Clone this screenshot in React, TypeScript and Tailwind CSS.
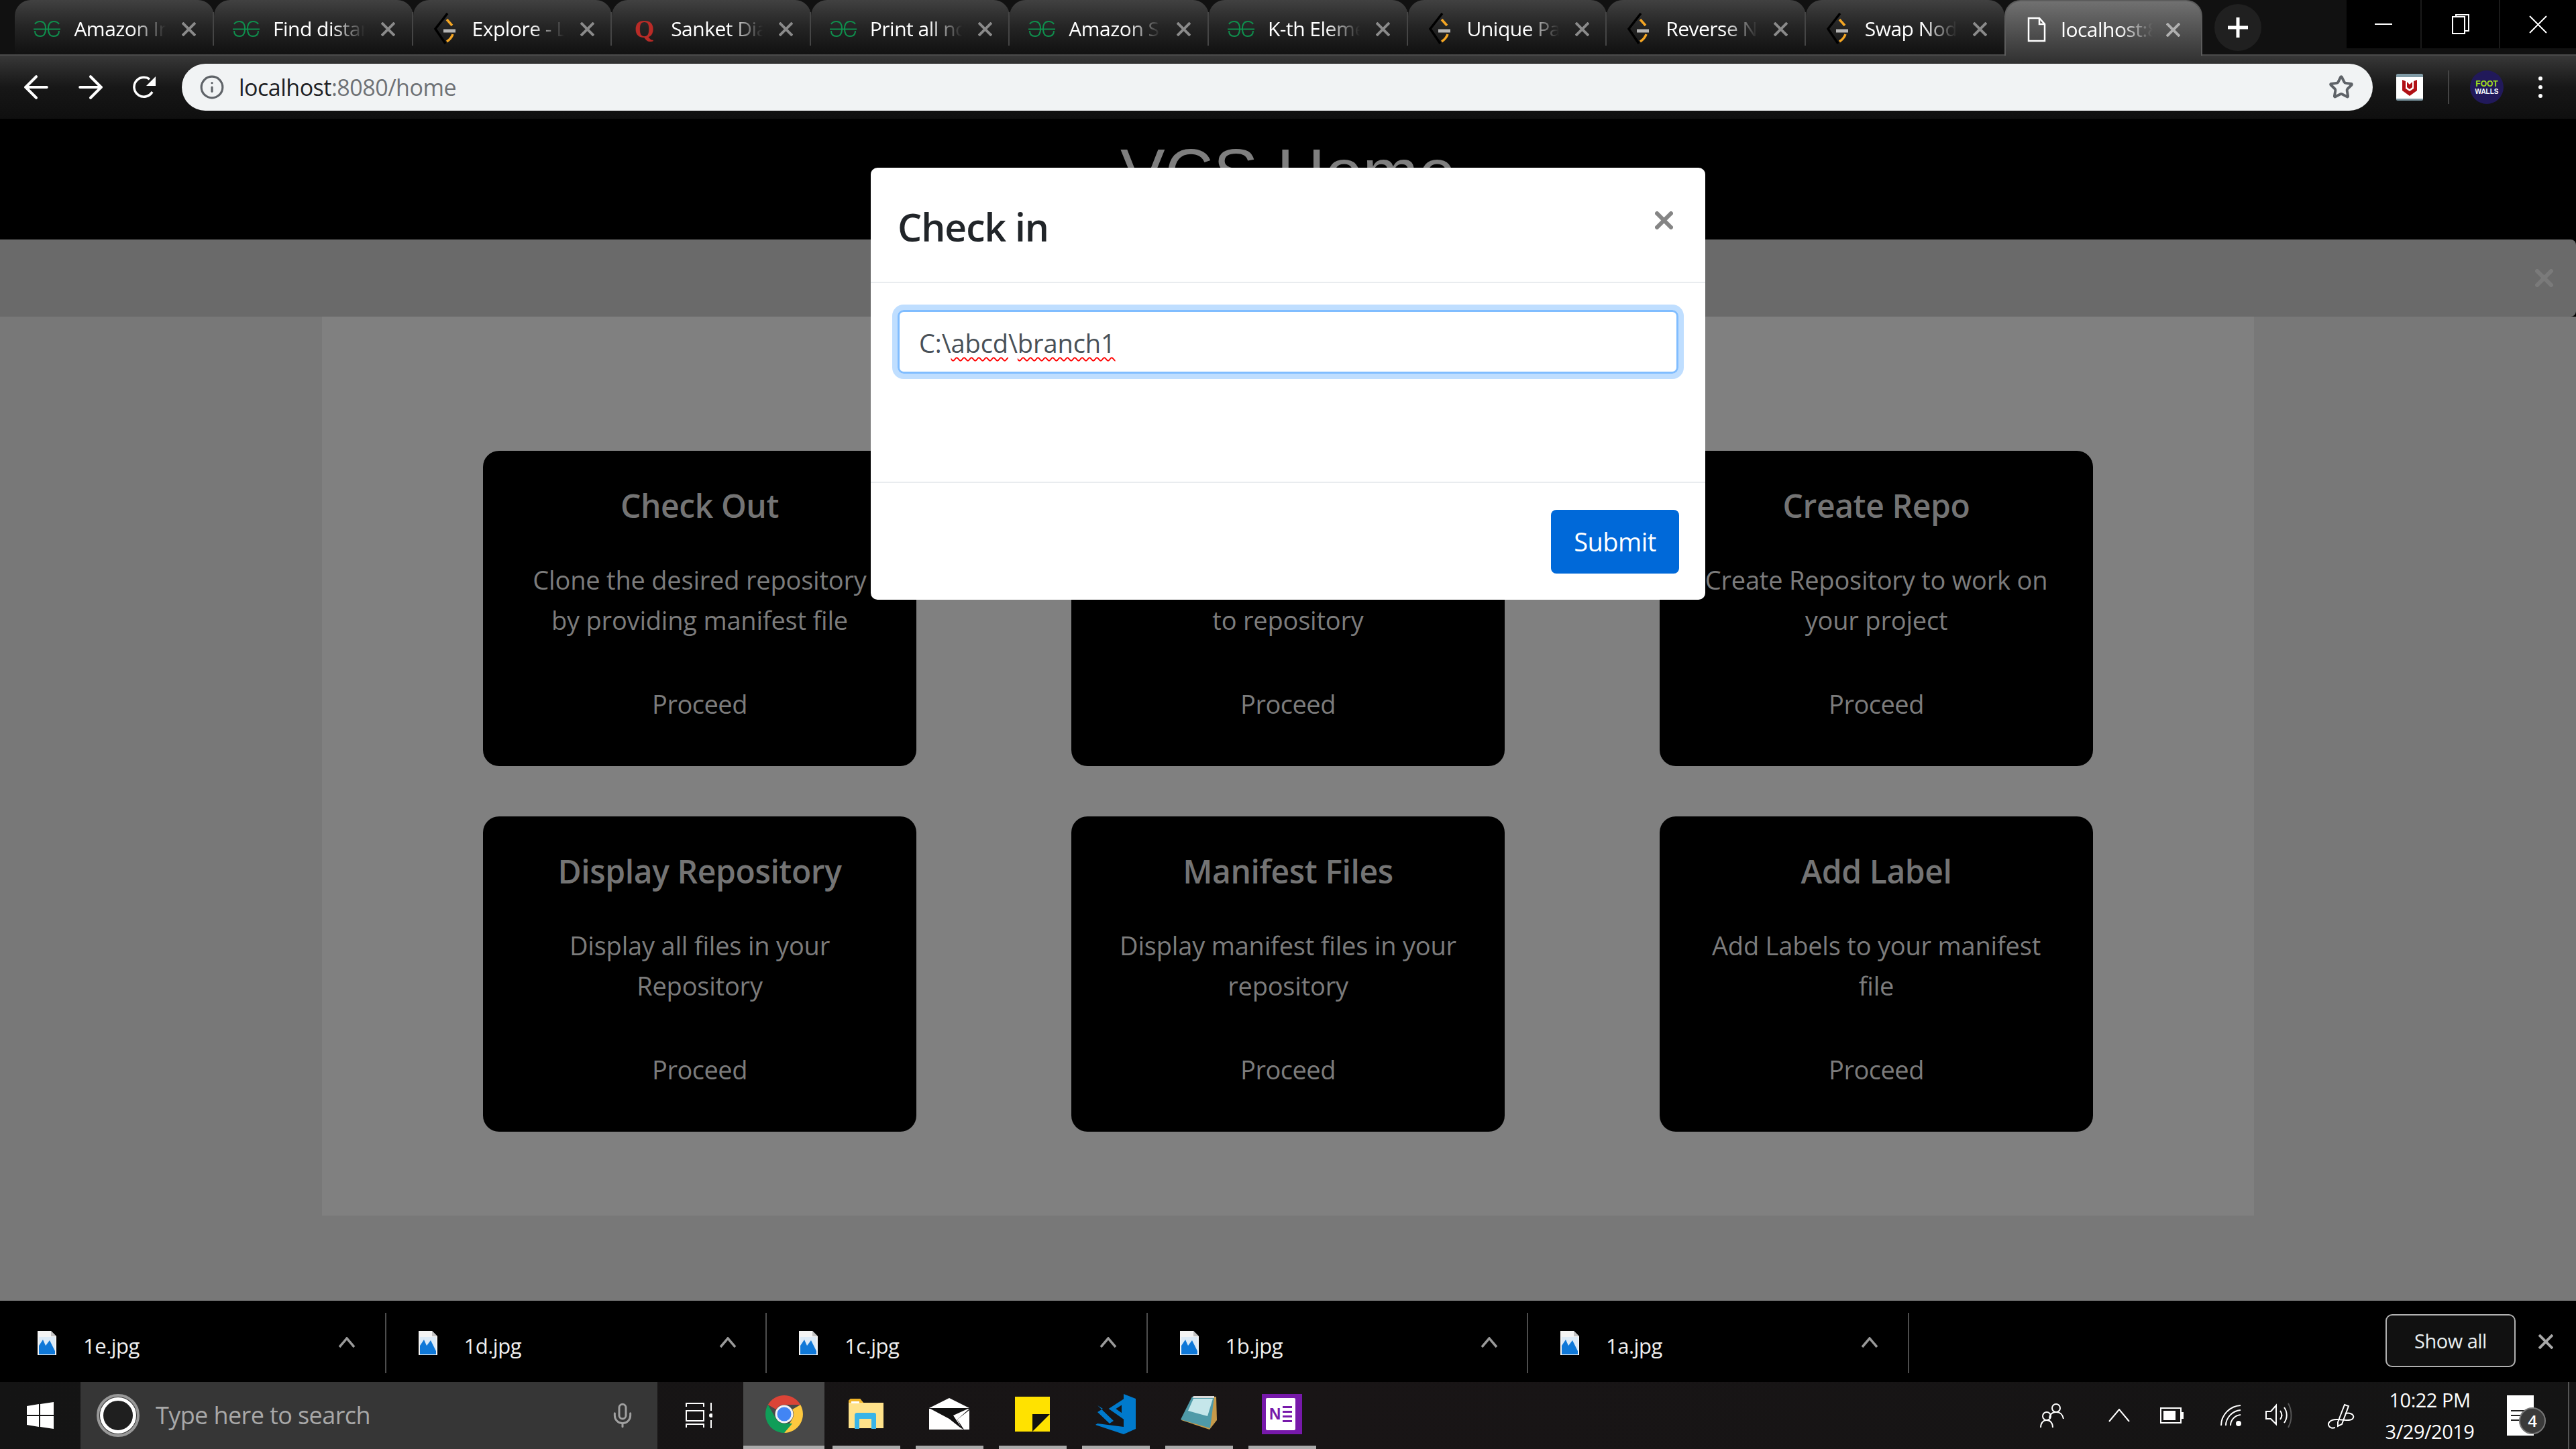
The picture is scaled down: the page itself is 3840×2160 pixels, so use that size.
import { ArrowLeft, ArrowRight, Info, Star, Mic } from "lucide-react";

const UI_FONT = "font-['Open_Sans','Noto_Sans',sans-serif]";

function Cross({ size, stroke, className }: { size: number; stroke: number; className: string }) {
  return (
    <svg width={size} height={size} viewBox={`0 0 ${size} ${size}`} className={className}>
      <path d={`M1 1L${size - 1} ${size - 1}M${size - 1} 1L1 ${size - 1}`} stroke="currentColor" strokeWidth={stroke} fill="none" />
    </svg>
  );
}

function GfgIcon() {
  return (
    <svg width="40" height="24" viewBox="0 0 40 24" fill="none" stroke="#0f8f4d" strokeWidth="2">
      <path d="M0 12.5H40" />
      <path d="M2 5C4 1.500 7 1 10 1C15 1 18 5 18 12C18 19 15 23 10 23C5 23 2 20 2 15" />
      <path d="M38 5C36 1.500 33 1 30 1C25 1 22 5 22 12C22 19 25 23 30 23C35 23 38 20 38 15" />
    </svg>
  );
}

function CodeIcon() {
  return (
    <svg width="36" height="48" viewBox="0 0 36 48" fill="none" strokeWidth="3.500">
      <path d="M21 1L3 24L18 46" stroke="#000" />
      <path d="M20 10L28 19" stroke="#f5a623" />
      <path d="M29 32C27 38 23 41 20 43" stroke="#f5a623" />
      <path d="M15 27H33" stroke="#b5b5b5" strokeWidth="5" />
    </svg>
  );
}

function QuoraIcon() {
  return <span className="font-['Liberation_Serif',serif] font-bold text-[38px] leading-none text-[#b92b27]">Q</span>;
}

function PageIcon() {
  return (
    <svg width="28" height="38" viewBox="0 0 28 38" fill="none" stroke="#fff" strokeWidth="2.500">
      <path d="M2 2H18L26 11V36H2Z" />
      <path d="M18 2V11H26" />
    </svg>
  );
}

type TabInfo = { title: string; icon: "gfg" | "code" | "quora" };

const tabs: TabInfo[] = [
  { title: "Amazon In", icon: "gfg" },
  { title: "Find distar", icon: "gfg" },
  { title: "Explore - L", icon: "code" },
  { title: "Sanket Dia", icon: "quora" },
  { title: "Print all no", icon: "gfg" },
  { title: "Amazon SI", icon: "gfg" },
  { title: "K-th Eleme", icon: "gfg" },
  { title: "Unique Pa", icon: "code" },
  { title: "Reverse N", icon: "code" },
  { title: "Swap Nod", icon: "code" },
];

function Tab({ tab, last }: { tab: TabInfo; last: boolean }) {
  return (
    <div className="w-[296.600px] h-[81px] shrink-0 flex items-center pt-[5px] pl-[28px] rounded-t-[24px] bg-gradient-to-b from-[#414141] via-[#242424] to-[#111111]">
      <div className="w-[40px] flex justify-center shrink-0">
        {tab.icon === "gfg" && <GfgIcon />}
        {tab.icon === "code" && <CodeIcon />}
        {tab.icon === "quora" && <QuoraIcon />}
      </div>
      <div className="ml-[20px] w-[140px] shrink-0 overflow-hidden whitespace-nowrap text-[30px] leading-[40px] text-white tracking-[-0.5px] [mask-image:linear-gradient(to_right,black_62%,transparent_98%)]">
        {tab.title}
      </div>
      <Cross size={21} stroke={4} className="ml-[21px] text-[#8a8a8a] shrink-0" />
      {!last && <div className="ml-auto w-[2px] h-[50px] bg-[#454545]" />}
    </div>
  );
}

function TabStrip() {
  return (
    <div className="h-[83px] shrink-0 flex items-start pl-[22.400px] bg-[#111111] border-b-2 border-[#4a4a4a]">
      {tabs.map((t, i) => (
        <Tab key={t.title} tab={t} last={i === tabs.length - 1} />
      ))}
      <div className="w-[295px] h-[83px] shrink-0 relative z-10 flex items-center pl-[32px] pt-[3px] rounded-t-[24px] border-x-2 border-t-2 border-[#5c5c5c] bg-gradient-to-b from-[#717171] to-[#383838]">
        <PageIcon />
        <div className="ml-[22px] w-[140px] overflow-hidden whitespace-nowrap text-[30px] leading-[40px] text-white tracking-[-0.5px] [mask-image:linear-gradient(to_right,black_62%,transparent_98%)]">
          localhost:8
        </div>
        <Cross size={21} stroke={4} className="ml-[17px] text-[#b0b0b0]" />
      </div>
      <div className="ml-[18px] mt-[6px] w-[70px] h-[70px] rounded-full bg-[#202020] flex items-center justify-center">
        <svg width="30" height="30" viewBox="0 0 30 30" stroke="#fff" strokeWidth="5">
          <path d="M15 0V30M0 15H30" />
        </svg>
      </div>
      <div className="ml-auto h-[72px] w-[342px] bg-black flex text-white">
        <div className="w-[112px] flex items-center justify-center border-r-2 border-[#1a1a1a]">
          <div className="w-[26px] h-[2px] bg-white" />
        </div>
        <div className="w-[117px] flex items-center justify-center border-r-2 border-[#1a1a1a]">
          <svg width="26" height="30" viewBox="0 0 26 30" fill="none" stroke="#fff" strokeWidth="2">
            <path d="M6 4V1H25V25H19" />
            <rect x="1" y="4" width="18" height="25" />
          </svg>
        </div>
        <div className="flex-1 flex items-center justify-center">
          <Cross size={27} stroke={2} className="text-white" />
        </div>
      </div>
    </div>
  );
}

function Toolbar() {
  return (
    <div className="h-[94px] shrink-0 flex items-center bg-gradient-to-b from-[#383838] via-[#171717] to-[#0f0f0f]">
      <div className="w-[271px] shrink-0 flex items-center text-white">
        <ArrowLeft size={54} strokeWidth={1.800} className="ml-[27px]" />
        <ArrowRight size={54} strokeWidth={1.800} className="ml-[27px]" />
        <svg width="38" height="38" viewBox="0 0 38 38" fill="none" className="ml-[34px]">
          <path d="M31 26A14.500 14.500 0 1 1 27 7" stroke="#fff" strokeWidth="3.500" />
          <path d="M36 3V17H22Z" fill="#fff" />
        </svg>
      </div>
      <div className="w-[3266px] h-[70px] shrink-0 rounded-full bg-[#f1f3f4] flex items-center pl-[26px] pr-[28px] text-[#5f6368]">
        <Info size={38} strokeWidth={2} />
        <div className="ml-[21px] text-[34px] tracking-[-0.5px] text-[#202124]">
          localhost<span className="text-[#6f7276]">:8080/home</span>
        </div>
        <Star size={38} strokeWidth={2.500} className="ml-auto" />
      </div>
      <div className="ml-[35px] w-[40px] h-[40px] bg-white border-t-[5px] border-b-[3px] border-[#7f9aa5] rounded-[2px] flex items-center justify-center">
        <svg width="24" height="26" viewBox="0 0 24 26">
          <path d="M1 1L6 3V14L12 18L18 14V3L23 1V17L12 25L1 17Z" fill="#b01015" />
          <path d="M8 4L12 8L16 4V12L12 15L8 12Z" fill="#b01015" />
        </svg>
      </div>
      <div className="ml-[37px] w-[2px] h-[50px] bg-[#444]" />
      <div className="ml-[31px] w-[50px] h-[50px] rounded-full bg-[#21195a] flex flex-col items-center justify-center font-['Liberation_Sans',sans-serif] font-bold text-[12px] leading-[12px]">
        <span className="text-[#a4e01c]">FOOT</span>
        <span className="text-white text-[10px] leading-[11px]">WALLS</span>
      </div>
      <div className="ml-[52px] flex flex-col gap-[7px]">
        <div className="w-[6px] h-[6px] rounded-full bg-white" />
        <div className="w-[6px] h-[6px] rounded-full bg-white" />
        <div className="w-[6px] h-[6px] rounded-full bg-white" />
      </div>
    </div>
  );
}

type CardInfo = { title: string; lines: [string, string] };

const cards: CardInfo[] = [
  { title: "Check Out", lines: ["Clone the desired repository", "by providing manifest file"] },
  { title: "Check In", lines: ["Check in your project files", "to repository"] },
  { title: "Create Repo", lines: ["Create Repository to work on", "your project"] },
  { title: "Display Repository", lines: ["Display all files in your", "Repository"] },
  { title: "Manifest Files", lines: ["Display manifest files in your", "repository"] },
  { title: "Add Label", lines: ["Add Labels to your manifest", "file"] },
];

function FeatureCard({ card }: { card: CardInfo }) {
  return (
    <div className="h-[470px] bg-black rounded-[24px] pt-[52px] text-center text-[#7c7c7c]">
      <h4 className="text-[48px] leading-[60px] font-semibold text-[#747474] tracking-[-0.4px]">{card.title}</h4>
      <p className="mt-[50px] text-[38px] leading-[60px] tracking-[-0.2px] whitespace-nowrap">
        {card.lines[0]}
        <br />
        {card.lines[1]}
      </p>
      <p className="mt-[65px] text-[38px] leading-[60px] tracking-[-0.5px]">Proceed</p>
    </div>
  );
}

function Page() {
  return (
    <div className="flex-1 min-h-0 flex flex-col">
      <header className="h-[180px] shrink-0 bg-black pt-[24px] text-center font-['Liberation_Sans',sans-serif] text-[100px] leading-[112px] text-[#7f7f7f]">
        VCS Home
      </header>
      <div className="h-[115px] shrink-0 bg-[#6a6a6a] rounded-r-[8px] flex items-center justify-end pr-[34px] text-[#7a7a7a]">
        <Cross size={27} stroke={6} className="" />
      </div>
      <main className="flex-1 min-h-0 bg-[#787878] flex justify-center">
        <div className="w-[2880px] h-[1340px] bg-[#808080] px-[240px] pt-[200px] grid grid-cols-[646px_646px_646px] gap-x-[231px] gap-y-[75px] content-start">
          {cards.map((c) => (
            <FeatureCard key={c.title} card={c} />
          ))}
        </div>
      </main>
    </div>
  );
}

function CheckInModal() {
  return (
    <div className="absolute left-[1298px] top-[250px] w-[1244px] h-[644px] bg-white rounded-[10px] flex flex-col">
      <div className="h-[172px] shrink-0 border-b-2 border-[#e9ecef] flex items-start justify-between pl-[40px] pr-[48px]">
        <h5 className="mt-[58px] text-[57px] leading-[60px] font-semibold text-[#212529] tracking-[-1px]">Check in</h5>
        <Cross size={27} stroke={6} className="mt-[65px] text-[#858585]" />
      </div>
      <div className="flex-1 pt-[40px] px-[40px]">
        <div className="h-[95px] rounded-[9px] border-[3px] border-[#80bdff] shadow-[0_0_0_8px_#bfdeff] flex items-center pl-[29px] pt-[4px] text-[38px] text-[#495057] tracking-[-0.1px]">
          C:\
          <span className="underline decoration-wavy decoration-[#ff0000] decoration-2 underline-offset-[6px]">abcd</span>
          \
          <span className="underline decoration-wavy decoration-[#ff0000] decoration-2 underline-offset-[6px]">branch1</span>
        </div>
      </div>
      <div className="h-[176px] shrink-0 border-t-2 border-[#e9ecef] flex items-start justify-end pt-[40px] pr-[39px]">
        <button className="w-[191px] h-[95px] rounded-[8px] bg-[#0069d9] text-white text-[38px] tracking-[-0.5px]">Submit</button>
      </div>
    </div>
  );
}

function FileIcon() {
  return (
    <svg width="28" height="36" viewBox="0 0 28 36">
      <path d="M0 0H20L28 8V36H0Z" fill="#f4f4f4" />
      <path d="M20 0L28 8H20Z" fill="#c4c4c4" />
      <rect x="2" y="9" width="24" height="26" fill="#0f78d8" />
      <path d="M2 9H26V30L18 14L12 22L8 13L2 22Z" fill="#dcebf8" />
    </svg>
  );
}

const downloads = ["1e.jpg", "1d.jpg", "1c.jpg", "1b.jpg", "1a.jpg"];

function DownloadBar() {
  return (
    <div className="h-[121px] shrink-0 bg-black flex items-start pl-[8px] text-white">
      {downloads.map((name) => (
        <div key={name} className="w-[567.500px] h-[90px] mt-[18px] shrink-0 relative flex items-center pl-[48px] border-r-2 border-[#4d4d4d]">
          <FileIcon />
          <span className="ml-[40px] mt-[8px] text-[31px] tracking-[-0.5px] text-[#f0f0f0]">{name}</span>
          <svg width="26" height="16" viewBox="0 0 26 16" fill="none" stroke="#9a9a9a" strokeWidth="3.500" className="absolute left-[496px] top-[36px]">
            <path d="M2 15L13 2L24 15" />
          </svg>
        </div>
      ))}
      <div className="ml-auto mt-[20px] w-[194px] h-[79px] bg-[#111] border-2 border-[#b0b0b0] rounded-[10px] flex items-center justify-center text-[29px] font-medium tracking-[-0.5px] text-[#e8eef0]">
        Show all
      </div>
      <div className="w-[90px] mt-[50px] flex justify-center">
        <Cross size={22} stroke={4} className="text-[#a8a8a8]" />
      </div>
    </div>
  );
}

function ChromeIcon() {
  return (
    <svg width="56" height="56" viewBox="0 0 56 56">
      <path d="M28 0A28 28 0 0 1 52.200 14H28A14 14 0 0 0 15.900 21L3.800 14A28 28 0 0 1 28 0Z" fill="#db4437" />
      <path d="M52.200 14A28 28 0 0 1 28 56L40.100 35A14 14 0 0 0 40.100 21L52.200 14Z" fill="#fdc83f" />
      <path d="M3.800 14L15.900 35A14 14 0 0 0 28 42H40.100L28 56A28 28 0 0 1 3.800 14Z" fill="#0f9d58" />
      <circle cx="28" cy="28" r="13.500" fill="#f3f3f3" />
      <circle cx="28" cy="28" r="10.500" fill="#4285f4" />
    </svg>
  );
}

function FolderIcon() {
  return (
    <svg width="52" height="46" viewBox="0 0 52 46">
      <path d="M0 3L3 0H17L22 6H52V44H0Z" fill="#ffe28a" />
      <path d="M0 3L3 0H17L22 6H0Z" fill="#f0b429" />
      <rect x="4" y="4" width="12" height="3" fill="#fff" />
      <path d="M9 45V24C9 22 11 21 12 21H38C40 21 41 22 41 24V45H34V30H16V45Z" fill="#39b4e8" />
    </svg>
  );
}

function MailIcon() {
  return (
    <svg width="60" height="48" viewBox="0 0 60 48">
      <path d="M30 0L60 15H0Z" fill="#fff" />
      <path d="M0 16H60L42 32L49 47H0Z" fill="#fff" />
      <path d="M0 15H60L36 26L50 47L30 31L0 15Z" fill="#111" />
      <path d="M0 47V20L24 34L52 47Z" fill="#fff" />
      <path d="M60 18V47H52L42 32Z" fill="#fff" />
    </svg>
  );
}

function StickyIcon() {
  return (
    <svg width="52" height="52" viewBox="0 0 52 52">
      <rect width="52" height="52" fill="#ffe200" />
      <path d="M26 26H52L26 52Z" fill="#111" />
    </svg>
  );
}

function CodeEditorIcon() {
  return (
    <svg width="60" height="60" viewBox="0 0 60 60">
      <path d="M42 0L60 7V52L42 60L0 46L3 44L42 49Z" fill="#007acc" />
      <path d="M42 11V34L25 22Z" fill="none" stroke="#007acc" strokeWidth="6" />
      <path d="M3 17L27 40L21 44L3 27L11 22Z" fill="#007acc" />
    </svg>
  );
}

function NotepadIcon() {
  return (
    <svg width="56" height="54" viewBox="0 0 56 54">
      <path d="M20 1H54L55 36L44 50L2 36Z" fill="#c69a4a" />
      <path d="M18 1H51L45 48L1 35Z" fill="#4f9aa8" />
      <path d="M20 4H49L41 30L12 22Z" fill="#c5e6ea" />
      <path d="M20 0H51V3H19Z" fill="#d9d9d9" />
    </svg>
  );
}

function OneNoteIcon() {
  return (
    <div className="w-[60px] h-[60px] bg-[#7719aa] flex items-center pl-[6px]">
      <div className="w-[44px] h-[48px] bg-white rounded-[2px] flex items-center pl-[5px] font-['Liberation_Sans',sans-serif] font-bold text-[24px] text-[#7719aa]">
        N
        <div className="ml-[3px] flex flex-col gap-[4px]">
          <div className="w-[14px] h-[3px] bg-[#7719aa]" />
          <div className="w-[14px] h-[3px] bg-[#7719aa]" />
          <div className="w-[14px] h-[3px] bg-[#7719aa]" />
          <div className="w-[14px] h-[3px] bg-[#7719aa]" />
        </div>
      </div>
    </div>
  );
}

const pinned = [
  { id: "folder", node: <FolderIcon /> },
  { id: "mail", node: <MailIcon /> },
  { id: "sticky", node: <StickyIcon /> },
  { id: "vscode", node: <CodeEditorIcon /> },
  { id: "notepad", node: <NotepadIcon /> },
  { id: "onenote", node: <OneNoteIcon /> },
];

function Taskbar() {
  return (
    <div className="h-[100px] shrink-0 flex items-stretch bg-gradient-to-r from-[#141414] via-[#191516] to-[#141414] text-white">
      <div className="w-[120px] flex items-center justify-center">
        <svg width="40" height="40" viewBox="0 0 40 40" fill="#fff">
          <path d="M0 6L18 3V19H0ZM20 3L40 0V19H20ZM0 21H18V37L0 34ZM20 21H40V40L20 37Z" />
        </svg>
      </div>
      <div className="w-[860px] bg-[#363636] flex items-center pl-[24px] pr-[32px]">
        <div className="w-[64px] h-[64px] rounded-full border-[4px] border-[#999] flex items-center justify-center">
          <div className="w-[54px] h-[54px] rounded-full border-[5px] border-white bg-[#1f1f1f]" />
        </div>
        <span className="ml-[24px] text-[36px] tracking-[-0.6px] text-[#a8a8a8]">Type here to search</span>
        <Mic size={40} strokeWidth={1.800} className="ml-auto text-[#a0a0a0]" />
      </div>
      <div className="w-[128px] pr-[4px] flex items-center justify-center">
        <svg width="40" height="38" viewBox="0 0 40 38" fill="none" stroke="#fff" strokeWidth="2">
          <path d="M1 6V1H27V6M1 37V32H27V37" />
          <rect x="1" y="12" width="26" height="15" />
          <path d="M38 0V12M38 26V38" />
          <circle cx="38" cy="19" r="2" fill="#fff" />
        </svg>
      </div>
      <div className="w-[121px] bg-[#484848] relative flex items-center justify-center border-b-[5px] border-[#aaa]">
        <ChromeIcon />
      </div>
      {pinned.map((p) => (
        <div key={p.id} className="w-[124px] flex flex-col items-center first:ml-[2px]">
          <div className="flex-1 flex items-center justify-center">{p.node}</div>
          <div className="w-[101px] h-[5px] bg-[#aaa]" />
        </div>
      ))}
      <div className="ml-auto flex items-center pr-[10px]">
        <svg width="36" height="38" viewBox="0 0 36 38" fill="none" stroke="#fff" strokeWidth="2">
          <circle cx="24" cy="8" r="6" />
          <path d="M14 23C15 16 20 14 24 14C30 14 34 18 35 24" />
          <circle cx="10" cy="20" r="6" />
          <path d="M1 37C1 30 5 26 10 26C15 26 19 30 19 37" />
        </svg>
        <svg width="32" height="20" viewBox="0 0 32 20" fill="none" stroke="#fff" strokeWidth="2" className="ml-[66px]">
          <path d="M1 19L16 1L31 19" />
        </svg>
        <div className="ml-[45px] flex items-center">
          <div className="w-[32px] h-[24px] border-2 border-white p-[3px]">
            <div className="w-[18px] h-full bg-white" />
          </div>
          <div className="w-[3px] h-[10px] bg-white" />
        </div>
        <svg width="32" height="32" viewBox="0 0 32 32" fill="none" stroke="#fff" strokeWidth="2" className="ml-[55px]">
          <path d="M1 31C1 15 14 2 30 1M8 31C8 19 18 9 30 8M15 31C15 23 21 16 30 15" />
          <circle cx="27" cy="28" r="3" fill="#fff" />
        </svg>
        <svg width="40" height="38" viewBox="0 0 40 38" fill="none" stroke="#fff" strokeWidth="2" className="ml-[35px]">
          <path d="M1 13H8L16 4V32L8 24H1Z" />
          <path d="M22 12C25 16 25 21 22 25M28 7C33 14 33 23 28 30" />
          <path d="M34 1C40 12 40 26 34 37" stroke="#555" />
        </svg>
        <svg width="42" height="40" viewBox="0 0 42 40" fill="none" stroke="#fff" strokeWidth="2" className="ml-[52px]">
          <path d="M16 30L26 4L32 6L22 33L16 36Z" />
          <path d="M27 17C36 15 42 20 38 25C34 29 26 26 14 26C4 26 0 32 3 36C5 39 9 39 12 38" />
        </svg>
        <div className="w-[170px] ml-[26px] flex flex-col items-center text-[29px] leading-[47px] tracking-[-0.5px]">
          <span>10:22 PM</span>
          <span>3/29/2019</span>
        </div>
        <div className="relative ml-[30px] mr-[51px] w-[40px] h-[60px] bg-white flex flex-col justify-center gap-[5px] px-[6px]">
          <div className="h-[2px] bg-[#222]" />
          <div className="h-[2px] bg-[#222]" />
          <div className="h-[2px] bg-[#222]" />
          <div className="absolute left-[18px] top-[18px] w-[40px] h-[40px] rounded-full bg-[#3a3a3a] border-2 border-[#777] flex items-center justify-center text-[24px] font-semibold">
            4
          </div>
        </div>
        <div className="w-[2px] h-[100px] bg-[#555]" />
      </div>
    </div>
  );
}

export default function App() {
  return (
    <div className={`w-[3840px] h-[2160px] relative flex flex-col overflow-hidden bg-black ${UI_FONT}`}>
      <TabStrip />
      <Toolbar />
      <Page />
      <DownloadBar />
      <Taskbar />
      <CheckInModal />
    </div>
  );
}
